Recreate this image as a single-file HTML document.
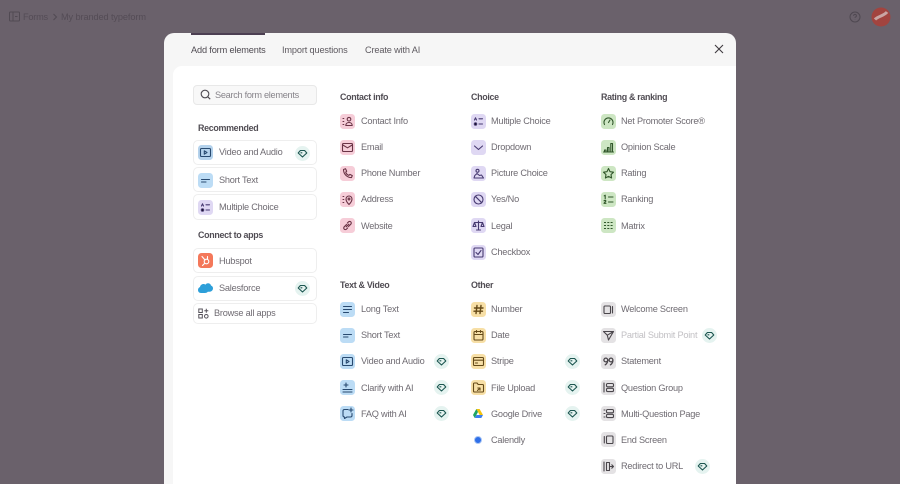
<!DOCTYPE html>
<html><head><meta charset="utf-8"><style>
*{box-sizing:border-box}
html,body{margin:0;padding:0;width:900px;height:484px;overflow:hidden;background:#6a616b;font-family:"Liberation Sans",sans-serif}
#w{position:absolute;left:0;top:0;width:900px;height:484px;overflow:hidden;background:#6a616b;filter:blur(.25px)}
.a{position:absolute}
#modal{left:164px;top:33px;width:571.5px;height:451px;background:#f6f6f6;border-radius:10px 10px 0 0}
#panel{left:173px;top:66px;width:562.5px;height:418px;background:#fff;border-top-left-radius:9px}
.tab{top:44px;font-size:9.2px;letter-spacing:-.15px;line-height:12px;color:#5e5a60;white-space:nowrap}
.h{font-size:8.9px;letter-spacing:-.3px;font-weight:700;color:#514d54;line-height:12px;white-space:nowrap}
.t{font-size:9.2px;letter-spacing:-.22px;color:#6f6b72;line-height:12px;white-space:nowrap}
.ic{width:15px;height:15px;border-radius:3.5px}
.ic svg{position:absolute;left:0;top:0;width:15px;height:15px;fill:none;stroke-width:1.1;stroke-linecap:round;stroke-linejoin:round}
.pk{background:#f6cdd8}.pk svg{stroke:#6a3345}
.pu{background:#dfd8f3}.pu svg{stroke:#463970}
.gr{background:#cde6c3}.gr svg{stroke:#30562a}
.bl{background:#bcdcf5}.bl svg{stroke:#284a70}
.ye{background:#f7dfa6}.ye svg{stroke:#654a18}
.gy{background:#e4e2e4}.gy svg{stroke:#4a464b}
.card{left:193px;width:124px;border:1px solid #eeeeee;border-radius:5px;background:#fff}
.d{width:15px;height:15px;border-radius:50%;background:#e5f3f0}
.d svg{position:absolute;left:0;top:0;width:15px;height:15px;fill:none;stroke:#1c5650;stroke-width:1.1;stroke-linejoin:round}
</style></head><body>
<svg width="0" height="0" style="position:absolute"><defs>
<symbol id="dm" viewBox="0 0 15 15"><path d="M5.400 4.500h4.200l2.200 2.500-4.300 4-4.300-4zM5.500 6.800h1.800"/></symbol>
<symbol id="mc" viewBox="0 0 15 15"><path d="M3.500 6l1-2.200 1 2.200M8 4.800h3.500M8 10h3.500"/><circle cx="4.500" cy="10" r="1.200" fill="currentColor"/></symbol>
<symbol id="st" viewBox="0 0 15 15"><path d="M3.500 6.500h8M3.500 9h4.500"/></symbol>
<symbol id="va" viewBox="0 0 15 15"><rect x="2.500" y="3.500" width="10" height="8" rx="1"/><path d="M6.300 5.800l2.700 1.700-2.700 1.700z"/></symbol>
</defs></svg>
<div id="w">
<!-- top bar -->
<svg class="a" style="left:9px;top:11px" width="11" height="11" viewBox="0 0 11 11" fill="none" stroke="#514a53" stroke-width="1"><rect x=".5" y="1" width="10" height="9" rx="1"/><path d="M4 1v9M6 5.500h2.500"/></svg>
<div class="a t" style="left:23px;top:11px;color:#544c56">Forms</div>
<svg class="a" style="left:52px;top:13px" width="6" height="8" viewBox="0 0 6 8" fill="none" stroke="#514a53" stroke-width="1"><path d="M1.500 1l3 3-3 3"/></svg>
<div class="a t" style="left:61px;top:11px;color:#544c56;letter-spacing:-.1px">My branded typeform</div>
<svg class="a" style="left:849px;top:11px" width="12" height="12" viewBox="0 0 12 12" fill="none" stroke="#4f4851" stroke-width="1"><circle cx="6" cy="6" r="5"/><path d="M4.600 4.800a1.400 1.400 0 1 1 1.800 1.300c-.3.100-.4.400-.4.700M6 8.500v.3"/></svg>
<svg class="a" style="left:871px;top:7px" width="20" height="20" viewBox="0 0 20 20"><circle cx="10" cy="10" r="9.500" fill="#a2443f"/><path d="M4 12.500C7 9 13 9 16 5" fill="none" stroke="#c9a5a3" stroke-width="3"/></svg>

<!-- modal -->
<div id="modal" class="a"></div>
<div id="panel" class="a"></div>
<div class="a" style="left:191px;top:33px;width:74px;height:2px;background:#4c3f52"></div>
<div class="a tab" style="left:191px;color:#4f4b52">Add form elements</div>
<div class="a tab" style="left:282px">Import questions</div>
<div class="a tab" style="left:365px">Create with AI</div>
<svg class="a" style="left:714px;top:44px" width="10" height="10" viewBox="0 0 10 10" fill="none" stroke="#3f3b40" stroke-width="1.100"><path d="M1 1l8 8M9 1l-8 8"/></svg>

<!-- search -->
<div class="a" style="left:193px;top:85px;width:124px;height:20px;background:#f8f8f8;border:1px solid #e8e8e8;border-radius:4px"></div>
<svg class="a" style="left:200px;top:89px" width="11" height="11" viewBox="0 0 11 11" fill="none" stroke="#4f4b52" stroke-width="1.100"><circle cx="5" cy="5" r="3.800"/><path d="M7.800 7.800l2.400 2.400"/></svg>
<div class="a t" style="left:215px;top:89px;color:#87848a;letter-spacing:-.3px">Search form elements</div>

<!-- left col -->
<div class="a h" style="left:198px;top:122px">Recommended</div>
<div class="a card" style="top:140px;height:25px"></div>
<div class="a card" style="top:167px;height:25px"></div>
<div class="a card" style="top:194px;height:26px"></div>
<div class="a ic bl" style="left:198px;top:145px;background:#b4d2ec"><svg><use href="#va"/></svg></div>
<div class="a t" style="left:219px;top:146px">Video and Audio</div>
<div class="a d" style="left:295px;top:146px"><svg><use href="#dm"/></svg></div>
<div class="a ic bl" style="left:198px;top:173px"><svg><use href="#st"/></svg></div>
<div class="a t" style="left:219px;top:174px">Short Text</div>
<div class="a ic pu" style="left:198px;top:200px"><svg><use href="#mc"/></svg></div>
<div class="a t" style="left:219px;top:201px">Multiple Choice</div>

<div class="a h" style="left:198px;top:229px">Connect to apps</div>
<div class="a card" style="top:248px;height:25px"></div>
<div class="a card" style="top:276px;height:25px"></div>
<div class="a card" style="top:303px;height:21px"></div>
<div class="a ic" style="left:198px;top:253px;background:#f4785a"><svg width="15" height="15" viewBox="0 0 15 15" style="stroke:#fff"><circle cx="8.500" cy="8.500" r="2.300"/><path d="M4 3.500l3 3.500M9.500 3.500v2.700M6.500 10.500l-2 2"/></svg></div>
<div class="a t" style="left:219px;top:255px">Hubspot</div>
<svg class="a" style="left:198px;top:282px" width="15" height="12" viewBox="0 0 15 12"><path d="M3 11C1 11 0 9.500 0 8c0-1.500.8-2.500 2-3 .3-1.800 1.800-3 3.500-3 .8 0 1.500.3 2 .7C8 1.800 9 1.300 10 1.300c1.500 0 2.700.8 3 2.200 1.300.5 2 1.500 2 2.800 0 2-1.500 3.500-3.500 3.500H9.800C9 10.700 8 11 7 11z" fill="#2d9fd9"/></svg>
<div class="a t" style="left:219px;top:282px">Salesforce</div>
<div class="a d" style="left:295px;top:281px"><svg><use href="#dm"/></svg></div>
<svg class="a" style="left:198px;top:308px" width="11" height="11" viewBox="0 0 11 11" fill="none" stroke="#56525a" stroke-width="1"><rect x=".8" y="1" width="3.500" height="3.500"/><rect x=".8" y="6.500" width="3.500" height="3.500"/><circle cx="8.300" cy="8.300" r="1.800"/><path d="M8.300 .8v4M6.300 2.800h4"/></svg>
<div class="a t" style="left:214px;top:307px">Browse all apps</div>

<!-- Contact -->
<div class="a h" style="left:340px;top:91px">Contact info</div>
<div class="a ic pk" style="left:340px;top:114px"><svg viewBox="0 0 15 15"><circle cx="9" cy="5.200" r="1.800"/><path d="M5.800 11.500c0-4 6.400-4 6.400 0zM3 4.500h.8M3 7.500h.8M3 10.500h.8"/></svg></div>
<div class="a t" style="left:361px;top:115px">Contact Info</div>
<div class="a ic pk" style="left:340px;top:140px"><svg viewBox="0 0 15 15"><rect x="2.500" y="3.500" width="10" height="8" rx="1"/><path d="M2.800 5l4.700 2.800L12.200 5"/></svg></div>
<div class="a t" style="left:361px;top:141px">Email</div>
<div class="a ic pk" style="left:340px;top:166px"><svg viewBox="0 0 15 15"><path d="M3.500 3.500l2-.8 1.200 2.500-1 1c.5 1.500 1.700 2.700 3.200 3.200l1-1 2.400 1.200-.8 2C7 11.500 3.500 8 3.500 3.500z"/></svg></div>
<div class="a t" style="left:361px;top:167px">Phone Number</div>
<div class="a ic pk" style="left:340px;top:192px"><svg viewBox="0 0 15 15"><path d="M9 12.500C7.500 11 6 9.500 6 7a3 3 0 0 1 6 0c0 2.500-1.500 4-3 5.500z"/><circle cx="9" cy="7" r=".9"/><path d="M3 4.500h.8M3 7.500h.8M3 10.500h.8"/></svg></div>
<div class="a t" style="left:361px;top:193px">Address</div>
<div class="a ic pk" style="left:340px;top:218px"><svg viewBox="0 0 15 15"><path d="M6.500 6.500l-2.300 2.300a1.600 1.600 0 0 0 2.300 2.300l1.200-1.200M8.500 8.500l2.300-2.300a1.600 1.600 0 0 0-2.300-2.300L7.300 5.100M6.200 8.800l2.600-2.600"/></svg></div>
<div class="a t" style="left:361px;top:220px">Website</div>

<!-- Choice -->
<div class="a h" style="left:471px;top:91px">Choice</div>
<div class="a ic pu" style="left:471px;top:114px"><svg><use href="#mc"/></svg></div>
<div class="a t" style="left:491px;top:115px">Multiple Choice</div>
<div class="a ic pu" style="left:471px;top:140px"><svg viewBox="0 0 15 15"><path d="M3.500 6l4 3.500 4-3.500"/></svg></div>
<div class="a t" style="left:491px;top:141px">Dropdown</div>
<div class="a ic pu" style="left:471px;top:166px"><svg viewBox="0 0 15 15"><circle cx="6.500" cy="4.800" r="1.500"/><path d="M3 12l.8-2.500L6 7.500l2.500 2 2-.5 2 3z"/></svg></div>
<div class="a t" style="left:491px;top:167px">Picture Choice</div>
<div class="a ic pu" style="left:471px;top:192px"><svg viewBox="0 0 15 15"><circle cx="7.500" cy="7.500" r="4.500"/><path d="M4.300 4.300l6.400 6.400"/></svg></div>
<div class="a t" style="left:491px;top:193px">Yes/No</div>
<div class="a ic pu" style="left:471px;top:218px"><svg viewBox="0 0 15 15"><path d="M7.500 3v9M5.500 12h4M3.500 4.500h8M3.500 4.500L2 8.500h3zM11.500 4.500L10 8.500h3z"/></svg></div>
<div class="a t" style="left:491px;top:220px">Legal</div>
<div class="a ic pu" style="left:471px;top:245px"><svg viewBox="0 0 15 15"><rect x="3" y="3" width="9" height="9" rx="1"/><path d="M5 7.500l2 2 3-4"/></svg></div>
<div class="a t" style="left:491px;top:246px">Checkbox</div>

<!-- Rating -->
<div class="a h" style="left:601px;top:91px">Rating &amp; ranking</div>
<div class="a ic gr" style="left:601px;top:114px"><svg viewBox="0 0 15 15"><path d="M3.500 10.500a4.500 4.500 0 1 1 8 0M7.500 8.500l1.500-2.500"/></svg></div>
<div class="a t" style="left:621px;top:115px">Net Promoter Score®</div>
<div class="a ic gr" style="left:601px;top:140px"><svg viewBox="0 0 15 15"><path d="M2.500 12h10M3.500 12v-2h1.500v2M6.500 12V7.500H8V12M9.800 12V3.500h1.700V12"/></svg></div>
<div class="a t" style="left:621px;top:141px">Opinion Scale</div>
<div class="a ic gr" style="left:601px;top:166px"><svg viewBox="0 0 15 15"><path d="M7.500 2.500l1.500 3.200 3.500.5-2.500 2.400.6 3.400-3.100-1.600-3.100 1.600.6-3.400L2.500 6.200 6 5.700z"/></svg></div>
<div class="a t" style="left:621px;top:167px">Rating</div>
<div class="a ic gr" style="left:601px;top:192px"><svg viewBox="0 0 15 15"><path d="M3.200 3.800l1-.6v3.500M3 8.800c.5-.8 2-.6 1.800.5L3 11.300h2M7.500 5h4.500M7.500 10h4.500"/></svg></div>
<div class="a t" style="left:621px;top:193px">Ranking</div>
<div class="a ic gr" style="left:601px;top:218px"><svg viewBox="0 0 15 15" style="stroke-dasharray:2 1.300;stroke-linecap:butt"><path d="M3 4.500h9.500M3 7.500h9.500M3 10.500h9.500"/></svg></div>
<div class="a t" style="left:621px;top:220px">Matrix</div>

<!-- Text & Video -->
<div class="a h" style="left:340px;top:279px">Text &amp; Video</div>
<div class="a ic bl" style="left:340px;top:302px"><svg viewBox="0 0 15 15"><path d="M3.500 4.500h8M3.500 7.500h8M3.500 10.500h5"/></svg></div>
<div class="a t" style="left:361px;top:303px">Long Text</div>
<div class="a ic bl" style="left:340px;top:328px"><svg><use href="#st"/></svg></div>
<div class="a t" style="left:361px;top:329px">Short Text</div>
<div class="a ic bl" style="left:340px;top:354px"><svg><use href="#va"/></svg></div>
<div class="a t" style="left:361px;top:355px">Video and Audio</div>
<div class="a d" style="left:434px;top:354px"><svg><use href="#dm"/></svg></div>
<div class="a ic bl" style="left:340px;top:380px"><svg viewBox="0 0 15 15"><path d="M3 9.500h9M3 12h9M6 3v4M4 5h4"/></svg></div>
<div class="a t" style="left:361px;top:382px">Clarify with AI</div>
<div class="a d" style="left:434px;top:380px"><svg><use href="#dm"/></svg></div>
<div class="a ic bl" style="left:340px;top:406px"><svg viewBox="0 0 15 15"><path d="M8 3.500H4.500a1.500 1.500 0 0 0-1.500 1.500v4.500A1.500 1.500 0 0 0 4.500 11v1.500L7 11h3.500A1.500 1.500 0 0 0 12 9.500V7.500M11 2v4M9 4h4"/></svg></div>
<div class="a t" style="left:361px;top:408px">FAQ with AI</div>
<div class="a d" style="left:434px;top:406px"><svg><use href="#dm"/></svg></div>

<!-- Other -->
<div class="a h" style="left:471px;top:279px">Other</div>
<div class="a ic ye" style="left:471px;top:302px"><svg viewBox="0 0 15 15" style="stroke-width:1.400"><path d="M6 3.500l-1 8M10 3.500l-1 8M3.500 6h8.500M3 9.200h8.500"/></svg></div>
<div class="a t" style="left:491px;top:303px">Number</div>
<div class="a ic ye" style="left:471px;top:328px"><svg viewBox="0 0 15 15"><rect x="3" y="3.500" width="9" height="8.500" rx="1"/><path d="M3 6.500h9M5.500 2.500v2M9.500 2.500v2"/></svg></div>
<div class="a t" style="left:491px;top:329px">Date</div>
<div class="a ic ye" style="left:471px;top:354px"><svg viewBox="0 0 15 15"><rect x="2.500" y="3.500" width="10" height="8" rx="1"/><path d="M2.500 6.200h10M4.500 9h2"/></svg></div>
<div class="a t" style="left:491px;top:355px">Stripe</div>
<div class="a d" style="left:565px;top:354px"><svg><use href="#dm"/></svg></div>
<div class="a ic ye" style="left:471px;top:380px"><svg viewBox="0 0 15 15"><path d="M2.500 4a1 1 0 0 1 1-1H6l1.200 1.500h4.300a1 1 0 0 1 1 1V11a1 1 0 0 1-1 1h-8a1 1 0 0 1-1-1zM6.500 10.500l2.500-2.500M6.800 8H9v2.200"/></svg></div>
<div class="a t" style="left:491px;top:382px">File Upload</div>
<div class="a d" style="left:565px;top:380px"><svg><use href="#dm"/></svg></div>
<svg class="a" style="left:473px;top:409px" width="10" height="9" viewBox="0 0 10 9"><path d="M3.300 0h3.300L10 6H6.700z" fill="#f4c20d"/><path d="M3.300 0L0 6l1.700 3L5 3z" fill="#1fa463"/><path d="M1.700 9h6.600L10 6H3.400z" fill="#3c7ff0"/></svg>
<div class="a t" style="left:491px;top:408px">Google Drive</div>
<div class="a d" style="left:565px;top:406px"><svg><use href="#dm"/></svg></div>
<div class="a" style="left:474px;top:436px;width:8px;height:8px;border-radius:50%;background:#2f6fe8;border:1px solid #a9c6f5"></div>
<div class="a t" style="left:491px;top:434px">Calendly</div>

<!-- Right bottom -->
<div class="a ic gy" style="left:601px;top:302px"><svg viewBox="0 0 15 15"><rect x="3" y="4" width="6.500" height="7.500" rx="1"/><path d="M11.500 4.500v6.500"/></svg></div>
<div class="a t" style="left:621px;top:303px">Welcome Screen</div>
<div class="a ic gy" style="left:601px;top:328px"><svg viewBox="0 0 15 15"><path d="M2.500 3.500h10L7.500 12 6.300 7.200zM6.300 7.200L12.500 3.500"/></svg></div>
<div class="a t" style="left:621px;top:329px;color:#c2c0c4">Partial Submit Point</div>
<div class="a d" style="left:702px;top:328px"><svg><use href="#dm"/></svg></div>
<div class="a ic gy" style="left:601px;top:354px"><svg viewBox="0 0 15 15" style="stroke-width:1.300"><circle cx="4.800" cy="6" r="1.900"/><circle cx="10" cy="6" r="1.900"/><path d="M6.700 6.200c0 2-1 3.600-2.500 4.600M11.900 6.200c0 2-1 3.600-2.500 4.600"/></svg></div>
<div class="a t" style="left:621px;top:355px">Statement</div>
<div class="a ic gy" style="left:601px;top:380px"><svg viewBox="0 0 15 15"><path d="M3 3v9"/><rect x="5.500" y="3.500" width="7" height="3.300" rx="1.200"/><rect x="5.500" y="8.300" width="7" height="3.300" rx="1.200"/></svg></div>
<div class="a t" style="left:621px;top:382px">Question Group</div>
<div class="a ic gy" style="left:601px;top:406px"><svg viewBox="0 0 15 15"><path d="M3 4h1M3 7.500h1M3 11h1"/><rect x="5.500" y="3.500" width="7" height="3.300" rx="1.200"/><rect x="5.500" y="8.300" width="7" height="3.300" rx="1.200"/></svg></div>
<div class="a t" style="left:621px;top:408px">Multi-Question Page</div>
<div class="a ic gy" style="left:601px;top:432px"><svg viewBox="0 0 15 15"><rect x="5.500" y="4" width="6.500" height="7.500" rx="1"/><path d="M3.300 4.500v6.500"/></svg></div>
<div class="a t" style="left:621px;top:434px">End Screen</div>
<div class="a ic gy" style="left:601px;top:459px"><svg viewBox="0 0 15 15"><path d="M3 3v9M5.500 3.500h3v8h-3zM8.500 7.500h4M10.800 5.800l1.700 1.700-1.700 1.700"/></svg></div>
<div class="a t" style="left:621px;top:460px">Redirect to URL</div>
<div class="a d" style="left:695px;top:459px"><svg><use href="#dm"/></svg></div>
</div>
</body></html>
